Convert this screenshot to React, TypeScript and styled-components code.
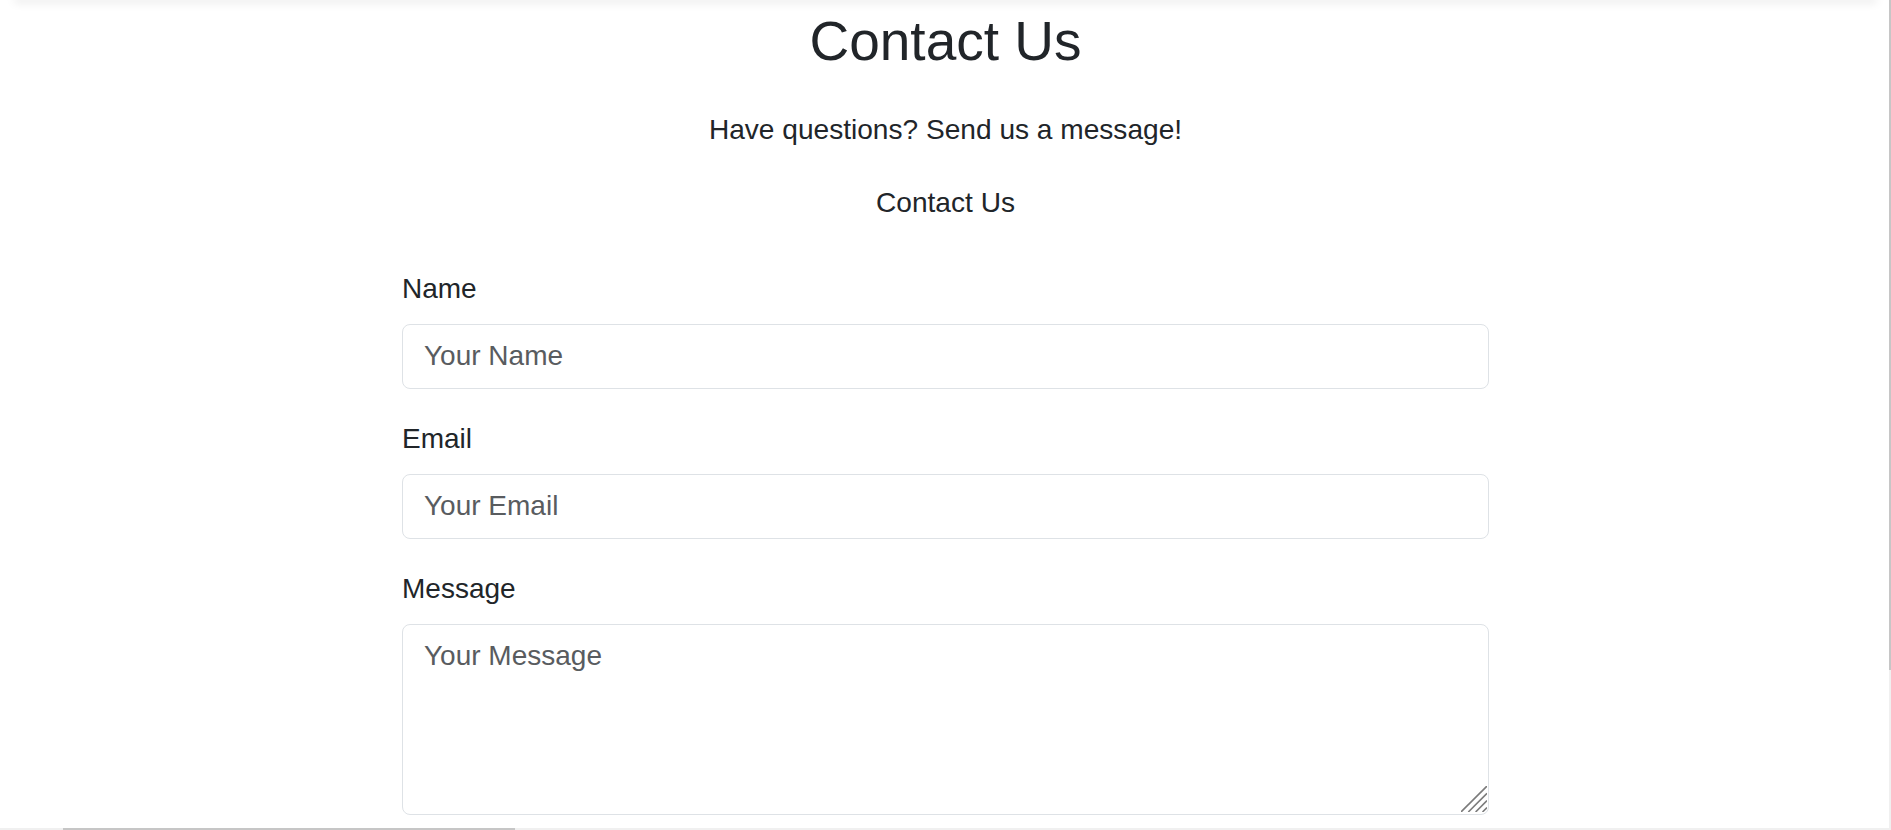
import React from "react";
import styled, { createGlobalStyle } from "styled-components";

const GlobalStyle = createGlobalStyle`
  body {
    margin: 0;
    background: #ffffff;
    color: #212529;
    font-family: "Liberation Sans", Arial, Helvetica, sans-serif;
  }
  *, *::before, *::after {
    box-sizing: border-box;
  }
`;

const Page = styled.div`
  min-height: 830px;
  display: flex;
  flex-direction: column;
`;

const TopShade = styled.div`
  height: 0;
  margin: 0 16px;
  box-shadow: 0 0 10px 2px rgba(0, 0, 0, 0.13);
`;

const Main = styled.main`
  padding-top: 8px;
  display: flex;
  flex-direction: column;
  align-items: center;
`;

const Title = styled.h1`
  margin: 0;
  font-size: 55px;
  line-height: 66px;
  font-weight: 400;
  color: #212529;
  text-align: center;
`;

const Lead = styled.p<{ $gap: number }>`
  margin: ${(p) => p.$gap}px 0 0;
  font-size: 28.1px;
  line-height: 42px;
  color: #212529;
  text-align: center;
`;

const Form = styled.form`
  width: 1087px;
  margin-top: 43.6px;
  display: flex;
  flex-direction: column;
`;

const Field = styled.div`
  display: flex;
  flex-direction: column;
  margin-bottom: 29px;
`;

const Label = styled.label`
  display: block;
  font-size: 28px;
  line-height: 42px;
  margin-bottom: 14px;
  color: #212529;
`;

const Input = styled.input`
  display: block;
  width: 100%;
  padding: 10.5px 21px;
  font-family: inherit;
  font-size: 28px;
  line-height: 42px;
  color: #212529;
  background: #ffffff;
  border: 1px solid #dee2e6;
  border-radius: 8px;
  outline: none;
  &::placeholder {
    color: #595c5f;
    opacity: 1;
  }
`;

const AreaWrap = styled.div`
  position: relative;
`;

const TextArea = styled.textarea`
  display: block;
  width: 100%;
  padding: 10.5px 21px;
  font-family: inherit;
  font-size: 28px;
  line-height: 42px;
  color: #212529;
  background: #ffffff;
  border: 1px solid #dee2e6;
  border-radius: 8px;
  outline: none;
  resize: none;
  &::placeholder {
    color: #595c5f;
    opacity: 1;
  }
`;

const Grip = styled.svg`
  position: absolute;
  right: 2px;
  bottom: 3px;
  width: 26px;
  height: 26px;
  pointer-events: none;
`;

const ScrollY = styled.div`
  position: fixed;
  top: 0;
  right: 0;
  width: 2px;
  height: 828px;
  background: #f0f0f0;
`;

const ScrollX = styled.div`
  position: fixed;
  left: 0;
  right: 0;
  bottom: 0;
  height: 2px;
  background: #f0f0f0;
`;

const ThumbY = styled.div`
  width: 2px;
  height: 670px;
  background: #c6c6c6;
`;

const ThumbX = styled.div`
  margin-left: 63px;
  width: 452px;
  height: 2px;
  background: #c6c6c6;
`;

export default function App() {
  return (
    <Page>
      <GlobalStyle />
      <TopShade />
      <Main>
        <Title>Contact Us</Title>
        <Lead $gap={34.6}>Have questions? Send us a message!</Lead>
        <Lead $gap={31.4}>Contact Us</Lead>
        <Form onSubmit={(e) => e.preventDefault()}>
          <Field>
            <Label htmlFor="name">Name</Label>
            <Input id="name" type="text" placeholder="Your Name" />
          </Field>
          <Field>
            <Label htmlFor="email">Email</Label>
            <Input id="email" type="email" placeholder="Your Email" />
          </Field>
          <Field>
            <Label htmlFor="message">Message</Label>
            <AreaWrap>
              <TextArea id="message" rows={4} placeholder="Your Message" />
              <Grip viewBox="0 0 26 26" aria-hidden="true">
                <g stroke="#7b7b7b" strokeWidth="1.6" fill="none">
                  <line x1="0" y1="26" x2="26" y2="0" />
                  <line x1="7.3" y1="26" x2="26" y2="7.3" />
                  <line x1="14.6" y1="26" x2="26" y2="14.6" />
                  <line x1="21.5" y1="26" x2="26" y2="21.5" />
                </g>
              </Grip>
            </AreaWrap>
          </Field>
        </Form>
      </Main>
      <ScrollY>
        <ThumbY />
      </ScrollY>
      <ScrollX>
        <ThumbX />
      </ScrollX>
    </Page>
  );
}
